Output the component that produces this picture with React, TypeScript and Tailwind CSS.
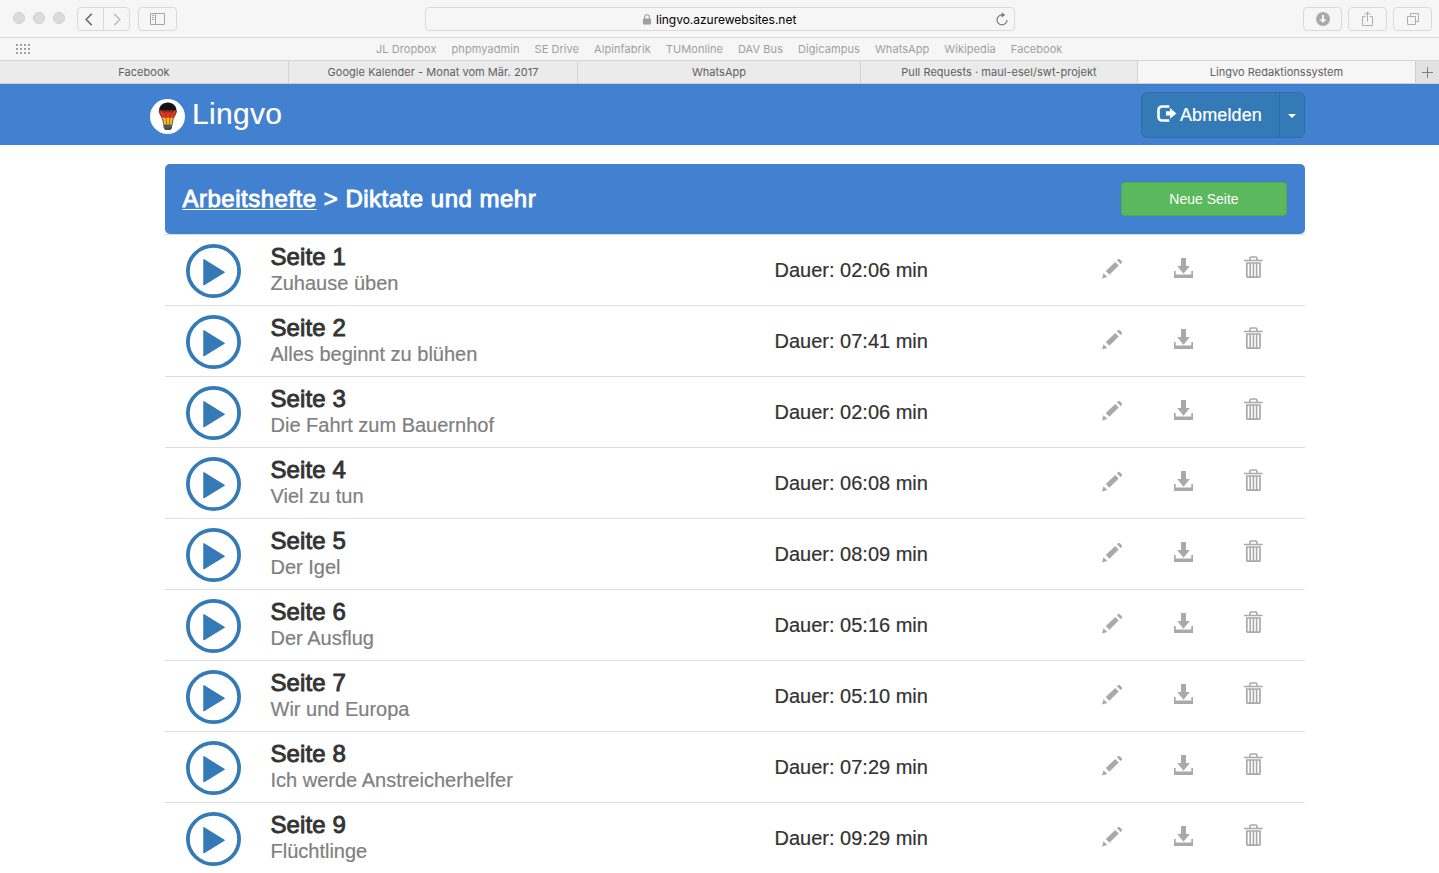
import type { ReactNode } from "react";

const bookmarks = [
  "JL Dropbox",
  "phpmyadmin",
  "SE Drive",
  "Alpinfabrik",
  "TUMonline",
  "DAV Bus",
  "Digicampus",
  "WhatsApp",
  "Wikipedia",
  "Facebook",
];

const tabs = [
  { label: "Facebook", size: "w-[289px]" },
  { label: "Google Kalender - Monat vom Mär. 2017", size: "w-[289px]" },
  { label: "WhatsApp", size: "w-[283px]" },
  { label: "Pull Requests · maul-esel/swt-projekt", size: "w-[277px]" },
];

const pages = [
  { title: "Zuhause üben", duration: "02:06" },
  { title: "Alles beginnt zu blühen", duration: "07:41" },
  { title: "Die Fahrt zum Bauernhof", duration: "02:06" },
  { title: "Viel zu tun", duration: "06:08" },
  { title: "Der Igel", duration: "08:09" },
  { title: "Der Ausflug", duration: "05:16" },
  { title: "Wir und Europa", duration: "05:10" },
  { title: "Ich werde Anstreicherhelfer", duration: "07:29" },
  { title: "Flüchtlinge", duration: "09:29" },
];

function ToolButton({ label, className, children }: { label: string; className: string; children: ReactNode }) {
  return (
    <button
      aria-label={label}
      className={`flex h-6 items-center justify-center border border-[#dadada] ${className}`}
    >
      {children}
    </button>
  );
}

function Toolbar() {
  return (
    <div className="flex h-[38px] items-start border-b border-[#d9d9d9] pt-[7px] pr-[7px] pl-[13px]">
      <div className="mt-[5px] flex gap-2">
        {[0, 1, 2].map((i) => (
          <span key={i} className="h-3 w-3 rounded-full border border-[#cfcfcf] bg-[#dcdcdc]" />
        ))}
      </div>
      <div className="ml-3 flex">
        <ToolButton label="Zurück" className="w-[27px] rounded-l-[4px]">
          <svg className="-ml-[3px]" width="8" height="13" viewBox="0 0 8 13" fill="none" stroke="#6f6f6f" strokeWidth="1.6">
            <path d="M6.7.9 1.2 6.5l5.500 5.600" />
          </svg>
        </ToolButton>
        <ToolButton label="Vorwärts" className="-ml-px w-[27px] rounded-r-[4px]">
          <svg width="8" height="13" viewBox="0 0 8 13" fill="none" stroke="#bdbdbd" strokeWidth="1.5">
            <path d="m1.300.9 5.500 5.600-5.500 5.600" />
          </svg>
        </ToolButton>
      </div>
      <ToolButton label="Seitenleiste" className="ml-2 w-[39px] rounded-[4px]">
        <svg width="15" height="12" viewBox="0 0 15 12" fill="none" stroke="#a6a6a6">
          <path d="M.5.5h14v11H.5zM5.5.5v11" />
          <path d="M2 2.500h2M2 4.500h2M2 6.500h2" />
        </svg>
      </ToolButton>
      <div className="ml-[248px] flex h-6 w-[590px] items-center rounded-[4px] border border-[#dadada]">
        <span className="w-[217px]" />
        <svg width="8" height="11" viewBox="0 0 8 11" fill="none">
          <path d="M1.600 5V3.200a2.400 2.400 0 0 1 4.800 0V5" stroke="#a0a0a0" strokeWidth="1.100" />
          <rect y="4.600" width="8" height="6" rx=".7" fill="#a0a0a0" />
        </svg>
        <span className="ml-[5px] w-[141px] whitespace-nowrap text-[12px] leading-[23px] tracking-[-0.02px] text-black">
          lingvo.azurewebsites.net
        </span>
        <svg className="mr-1.5 ml-auto" width="12" height="14" viewBox="0 0 12 14" fill="none" stroke="#777" strokeWidth="1.200">
          <path d="M7.200 2.900H6a5 5 0 1 0 5 5" />
          <path d="M5.600.3v5.200L9.200 2.900z" fill="#777" stroke="none" />
        </svg>
      </div>
      <div className="ml-auto flex gap-1.5">
        <ToolButton label="Downloads" className="w-[39px] rounded-[4px]">
          <svg width="14" height="14" viewBox="0 0 14 14">
            <circle cx="7" cy="7" r="7" fill="#aaa" />
            <path d="M6 3h2v4.200h2.600L7 11 3.400 7.200H6z" fill="#f6f6f6" />
          </svg>
        </ToolButton>
        <ToolButton label="Teilen" className="w-[39px] rounded-[4px]">
          <svg className="-mt-px" width="13" height="16" viewBox="0 0 13 16" fill="none" stroke="#adadad">
            <path d="M4.500 5.500h-3v9h10v-9h-3M6.500 10.500V1M3.500 4l3-3 3 3" />
          </svg>
        </ToolButton>
        <ToolButton label="Alle Tabs" className="w-[39px] rounded-[4px]">
          <svg width="12" height="12" viewBox="0 0 12 12" fill="none" stroke="#adadad">
            <path d="M.5 3.500h8v8h-8zM3.500 3.500v-3h8v8h-3" />
          </svg>
        </ToolButton>
      </div>
    </div>
  );
}

function BookmarkBar() {
  return (
    <div className="flex h-[23px] items-center border-b border-[#d5d5d5] pl-4">
      <svg width="14" height="10" viewBox="0 0 14 10" fill="#a3a3a3">
        {[0, 4, 8].map((y) =>
          [0, 4, 8, 12].map((x) => <rect key={`${x}-${y}`} x={x} y={y} width="2" height="2" />),
        )}
      </svg>
      <nav className="ml-[346px] flex gap-[15px] text-[11px] tracking-[0.065px] whitespace-nowrap text-[#9f9f9f]">
        {bookmarks.map((name) => (
          <a key={name}>{name}</a>
        ))}
      </nav>
    </div>
  );
}

function TabBar() {
  return (
    <div className="flex h-[23px] border-b border-[#cfcfcf] bg-[#ebebeb] text-center text-[11px] leading-[22px] tracking-[0.04px] whitespace-nowrap text-[#606060]">
      {tabs.map((tab) => (
        <div key={tab.label} className={`border-r border-[#d3d3d3] ${tab.size}`}>
          {tab.label}
        </div>
      ))}
      <div className="w-[278px] border-r border-[#cfcfcf] bg-[#f6f6f6]">Lingvo Redaktionssystem</div>
      <div className="flex flex-1 items-center justify-center bg-[#e2e2e2]">
        <svg width="11" height="11" viewBox="0 0 11 11" stroke="#808080">
          <path d="M5.500 0v11M0 5.500h11" />
        </svg>
      </div>
    </div>
  );
}

function Logo() {
  return (
    <svg width="35" height="35" viewBox="0 0 35 35">
      <circle cx="17.500" cy="17.500" r="17.500" fill="#fff" />
      <path d="M9 12c0-5 3.600-8.500 8.800-8.500S26.500 7 26.500 12z" fill="#171313" />
      <path d="M9 11.500h17.500c0 3-1.700 5-3 7.500H12.200C10.800 16.500 9 14.500 9 11.500z" fill="#dd3524" />
      <path d="M12.200 18.800h11.400c-.8 2-1.200 3.600-1.300 6.700h-8.800c-.1-3.100-.5-4.700-1.300-6.700z" fill="#f3bd27" />
      <path d="M9 12c.2 3.500 4.400 6.500 4.500 13.500M26.500 12c-.2 3.500-4.100 6.500-4.200 13.500" fill="none" stroke="#3b1c16" strokeWidth=".7" />
      <path d="m12.300 11.800 2 1.500 2-1.200 1.600 1.200 1.800-1.200 1.900 1.200 2-1.500" fill="none" stroke="#3b1c16" strokeWidth=".8" />
      <path d="m15.500 13.500 1.200 12M20.500 13.500l-1.200 12" fill="none" stroke="#7a3018" strokeWidth=".6" />
      <path d="M13.300 25.500h9l-.3 3.400-1.500 2h-5.200l-1.600-2z" fill="#494949" />
      <path d="m13.500 28.300 8.600-1.200" stroke="#888" strokeWidth=".5" />
    </svg>
  );
}

function Navbar() {
  return (
    <header className="flex h-[61px] items-start bg-[#4280d0] pr-[134px] pl-[150px] text-white">
      <div className="mt-[15px]">
        <Logo />
      </div>
      <span className="mt-[10px] ml-[7px] text-[30px] leading-10 tracking-[0.3px] [-webkit-text-stroke:0.2px_white]">Lingvo</span>
      <div className="mt-2 ml-auto flex h-[46px] rounded-[6px] border border-[#2e6da4] bg-[#337ab7]">
        <button className="flex w-[138px] items-center border-r border-[#2e6da4] pl-[15px] text-[18px]">
          <svg className="-mt-[3px]" width="20" height="17" viewBox="0 0 20 17">
            <path d="M12.300 1.500H5A3.500 3.500 0 0 0 1.500 5v7A3.500 3.500 0 0 0 5 15.500h7.300" fill="none" stroke="#fff" strokeWidth="2.600" />
            <path d="M9 6.200h4V3l6.500 5.400-6.500 5.400v-3.200H9z" fill="#fff" />
          </svg>
          <span className="ml-[3px] tracking-[0.1px] [-webkit-text-stroke:0.2px_white]">Abmelden</span>
        </button>
        <button aria-label="Menü" className="flex w-6 items-center justify-center pt-px">
          <svg width="8" height="4" viewBox="0 0 8 4" fill="#fff">
            <path d="M0 0h8L4 4z" />
          </svg>
        </button>
      </div>
    </header>
  );
}

function PlayIcon() {
  return (
    <svg width="55" height="54" viewBox="0 0 55 54">
      <ellipse cx="27.500" cy="27" rx="25.600" ry="25.100" fill="none" stroke="#337ab7" strokeWidth="3.800" />
      <path d="M17.800 15.500 38.500 28.300 17.800 41z" fill="#337ab7" stroke="#337ab7" strokeLinejoin="round" />
    </svg>
  );
}

function PencilIcon() {
  return (
    <svg width="21" height="21" viewBox="0 0 21 21" fill="#a9a9a9">
      <path d="M0 20.500 1.500 15.200 5.300 19zM3.800 13.100 13.200 3.900l3.500 3.500-9.300 9.300zM14.900 2.300 16 1.200q.9-.9 1.800 0l2 2q.8.9 0 1.700L18.600 6z" />
    </svg>
  );
}

function DownloadIcon() {
  return (
    <svg width="19" height="20" viewBox="0 0 19 20" fill="#a9a9a9">
      <path d="M7 0h5v8h3.800L9.500 15.800 3.200 8H7zM0 13h1.700v3.600h15.600V13H19v7H0z" />
    </svg>
  );
}

function TrashIcon() {
  return (
    <svg width="19" height="22" viewBox="0 0 19 22" fill="none" stroke="#a9a9a9">
      <path d="M0 4.500h18.600M5.900 4V2.200q0-1.200 1.200-1.200h4.600q1.200 0 1.200 1.200V4" strokeWidth="1.600" />
      <path d="M2.800 7h13.200v13.200q0 1-1 1H3.800q-1 0-1-1z" strokeWidth="1.700" />
      <path d="M6.200 7v14M9.400 7v14M12.600 7v14" strokeWidth="1.600" />
    </svg>
  );
}

export default function App() {
  return (
    <div className="h-[873px] overflow-hidden bg-white font-['Liberation_Sans',Arial,sans-serif]">
      <div className="bg-[#f6f6f6] font-[Inter,sans-serif]">
        <Toolbar />
        <BookmarkBar />
        <TabBar />
      </div>
      <Navbar />
      <main className="mt-[19px] ml-[165px] w-[1140px] text-[#333]">
        <div className="flex h-[70px] items-center justify-between rounded-[5px] bg-[#4280d0] pr-[18px] pl-[17.500px] text-white">
          <h1 className="text-[24px] tracking-[0.5px] whitespace-nowrap [-webkit-text-stroke:0.9px_white]">
            <a className="underline decoration-1 underline-offset-2">Arbeitshefte</a>
            {" > Diktate und mehr"}
          </h1>
          <button className="h-[34px] w-[166px] rounded-[4px] border border-[#4cae4c] bg-[#5cb85c] text-[14px]">
            Neue Seite
          </button>
        </div>
        <ul>
          {pages.map((page, i) => (
            <li key={page.title + i} className="flex h-[71px] items-start border-t border-[#ddd] pl-[21px]">
              <button aria-label="Abspielen" className="mt-[9px]">
                <PlayIcon />
              </button>
              <div className="mt-[9px] ml-[29.500px] w-[504px]">
                <h2 className="text-[24px] leading-[26px] tracking-[0.1px] [-webkit-text-stroke:0.9px_#333]">Seite {i + 1}</h2>
                <p className="text-[20px] leading-[26px] text-[#808080] [-webkit-text-stroke:0.2px_#808080]">{page.title}</p>
              </div>
              <span className="mt-[22px] w-[327.500px] text-[20px] leading-[26px] [-webkit-text-stroke:0.2px_#333]">Dauer: {page.duration} min</span>
              <button aria-label="Bearbeiten" className="mt-[22.500px]">
                <PencilIcon />
              </button>
              <button aria-label="Herunterladen" className="mt-[23px] ml-[51px]">
                <DownloadIcon />
              </button>
              <button aria-label="Löschen" className="mt-[21px] ml-[51px]">
                <TrashIcon />
              </button>
            </li>
          ))}
        </ul>
      </main>
    </div>
  );
}
